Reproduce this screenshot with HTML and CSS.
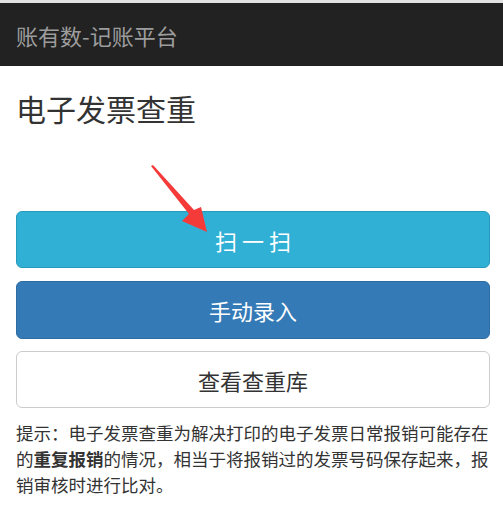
FILE: index.html
```html
<!DOCTYPE html>
<html lang="zh-CN">
<head>
<meta charset="utf-8">
<title>电子发票查重</title>
<link rel="stylesheet" href="styles.css">
</head>
<body>
<div class="topline"></div>
<nav class="navbar"><span class="brand">账有数-记账平台</span></nav>
<main class="content">
  <h1 class="title">电子发票查重</h1>
  <div class="actions">
    <button class="btn btn-info">扫 一 扫</button>
    <button class="btn btn-primary">手动录入</button>
    <button class="btn btn-default">查看查重库</button>
  </div>
  <p class="tip">提示：电子发票查重为解决打印的电子发票日常报销可能存在的<b>重复报销</b>的情况，相当于将报销过的发票号码保存起来，报销审核时进行比对。</p>
</main>
<svg class="arrow" width="503" height="513" viewBox="0 0 503 513">
  <polygon points="151,166 189,214 182,221 207,232 201,207 194,210 153,165" fill="#f53a3a"/>
</svg>
</body>
</html>
```
FILE: styles.css
```css
html, body {
  margin: 0;
  padding: 0;
  background: #fff;
  font-family: "Noto Sans CJK SC", "Noto Sans", sans-serif;
  color: #333;
}
.topline {
  height: 3px;
  background: #e2e2e2;
}
.navbar {
  height: 63px;
  background: #222;
  display: flex;
  align-items: center;
  padding: 0 16px;
}
.brand {
  color: #9d9d9d;
  font-size: 22px;
  line-height: 1;
}
.content {
  padding: 0 13px 0 16px;
}
.title {
  margin: 25px 0 0;
  font-size: 30px;
  font-weight: 400;
  line-height: 34px;
  color: #333;
}
.actions {
  margin-top: 86px;
  display: flex;
  flex-direction: column;
  gap: 13px;
}
.btn {
  display: block;
  width: 100%;
  height: 57px;
  border-radius: 6px;
  border: 1px solid transparent;
  font-family: inherit;
  font-size: 22px;
  line-height: 1;
  padding: 0;
}
.btn-info {
  background: #31b0d5;
  border-color: #269abc;
  color: #fff;
}
.btn-primary {
  background: #337ab7;
  border-color: #2e6da4;
  color: #fff;
  height: 58px;
}
.btn-default {
  background: #fff;
  border-color: #ccc;
  color: #333;
  margin-top: -1px;
}
.tip {
  margin: 12px 0 0;
  font-size: 17.5px;
  line-height: 26px;
  color: #333;
}
.tip b {
  font-weight: 700;
}
.arrow {
  position: absolute;
  left: 0;
  top: 0;
  pointer-events: none;
}
```
